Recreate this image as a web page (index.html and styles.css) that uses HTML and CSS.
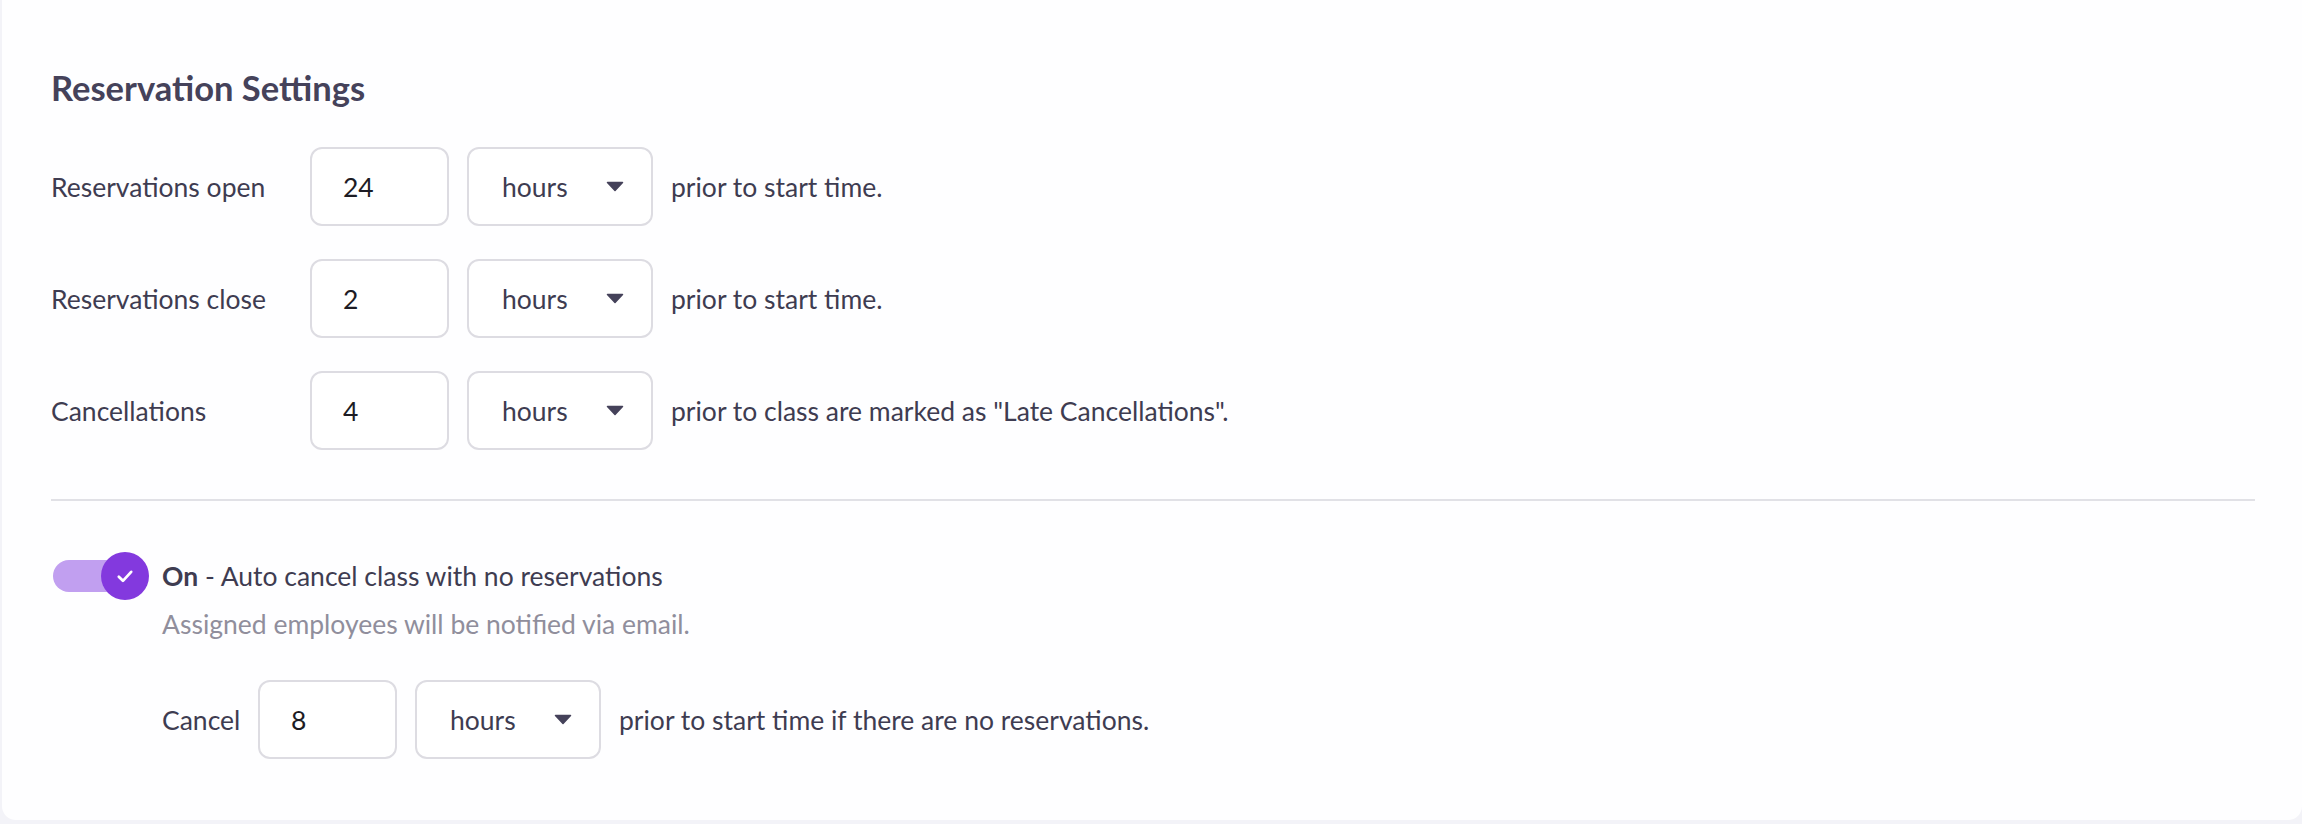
FILE: index.html
```html
<!DOCTYPE html>
<html lang="en">
<head>
<meta charset="utf-8">
<title>Reservation Settings</title>
<link rel="stylesheet" href="styles.css">
</head>
<body>
<div class="card">
  <h2 class="title">Reservation Settings</h2>
  <div class="rows">
    <div class="row">
      <span class="label">Reservations open</span>
      <input class="num" type="text" value="24">
      <div class="select"><span>hours</span><svg class="caret" viewBox="0 0 18 11"><path d="M1.5 1.5h15l-7.5 8z"/></svg></div>
      <span class="suffix">prior to start time.</span>
    </div>
    <div class="row">
      <span class="label">Reservations close</span>
      <input class="num" type="text" value="2">
      <div class="select"><span>hours</span><svg class="caret" viewBox="0 0 18 11"><path d="M1.5 1.5h15l-7.5 8z"/></svg></div>
      <span class="suffix">prior to start time.</span>
    </div>
    <div class="row">
      <span class="label">Cancellations</span>
      <input class="num" type="text" value="4">
      <div class="select"><span>hours</span><svg class="caret" viewBox="0 0 18 11"><path d="M1.5 1.5h15l-7.5 8z"/></svg></div>
      <span class="suffix">prior to class are marked as "Late Cancellations".</span>
    </div>
  </div>
  <div class="divider"></div>
  <div class="auto">
    <div class="toggle-row">
      <div class="toggle">
        <div class="track"></div>
        <div class="knob"><svg viewBox="0 0 16 16"><path d="M3.5 8.5l3 3 6-6.5"/></svg></div>
      </div>
      <span class="toggle-text"><b>On</b> - Auto cancel class with no reservations</span>
    </div>
    <p class="hint">Assigned employees will be notified via email.</p>
    <div class="row cancel-row">
      <span class="cancel-label">Cancel</span>
      <input class="num" type="text" value="8">
      <div class="select"><span>hours</span><svg class="caret" viewBox="0 0 18 11"><path d="M1.5 1.5h15l-7.5 8z"/></svg></div>
      <span class="suffix">prior to start time if there are no reservations.</span>
    </div>
  </div>
</div>
</body>
</html>
```
FILE: styles.css
```css
* { box-sizing: border-box; }
html, body { margin: 0; padding: 0; }
body {
  background: #f3f3f8;
  font-family: "Source Sans Pro", Lato, "Open Sans", sans-serif;
  color: #3e3c51;
  font-size: 26.5px;
}
.card {
  margin-left: 2px;
  height: 820px;
  background: #fefeff;
  border-radius: 0 0 14px 14px;
  padding: 68px 47px 60px 49px;
}
.title {
  margin: 0;
  font-size: 34.5px;
  line-height: 40px;
  font-weight: 700;
  color: #45425a;
}
.rows {
  margin-top: 39px;
  display: flex;
  flex-direction: column;
  gap: 33px;
}
.row {
  display: flex;
  align-items: center;
  height: 79px;
}
.label {
  width: 259px;
  flex: none;
}
.num {
  width: 139px;
  height: 79px;
  border: 2px solid #dddce2;
  border-radius: 12px;
  padding: 0 0 0 31px;
  font-family: inherit;
  font-size: 26.5px;
  color: #1d1c24;
  background: #fff;
  outline: none;
}
.select {
  margin-left: 18px;
  width: 186px;
  height: 79px;
  border: 2px solid #dddce2;
  border-radius: 12px;
  background: #fff;
  display: flex;
  align-items: center;
  justify-content: space-between;
  padding: 0 27px 0 33px;
  color: #3e3c51;
}
.caret {
  width: 18px;
  height: 11px;
  fill: #45425a;
  stroke: #45425a;
  stroke-width: 1.5;
  stroke-linejoin: round;
}
.suffix {
  margin-left: 18px;
}
.divider {
  margin-top: 49px;
  height: 2px;
  background: #e1e1e6;
}
.auto {
  padding-left: 2px;
}
.toggle-row {
  margin-top: 51px;
  display: flex;
  align-items: center;
  height: 48px;
}
.toggle {
  position: relative;
  width: 96px;
  height: 48px;
  flex: none;
}
.track {
  position: absolute;
  left: 0;
  top: 8px;
  width: 90px;
  height: 32px;
  border-radius: 16px;
  background: #c19ff0;
}
.knob {
  position: absolute;
  right: 0;
  top: 0;
  width: 48px;
  height: 48px;
  border-radius: 50%;
  background: #8339de;
  display: flex;
  align-items: center;
  justify-content: center;
}
.knob svg {
  width: 22px;
  height: 22px;
  fill: none;
  stroke: #fff;
  stroke-width: 2;
  stroke-linecap: round;
  stroke-linejoin: round;
}
.toggle-text {
  margin-left: 13px;
}
.toggle-text b {
  font-weight: 700;
}
.hint {
  margin: 8px 0 0 109px;
  line-height: 32px;
  color: #908e9c;
}
.cancel-row {
  margin-top: 40px;
  padding-left: 109px;
}
.cancel-label {
  width: 96px;
  flex: none;
}
```
